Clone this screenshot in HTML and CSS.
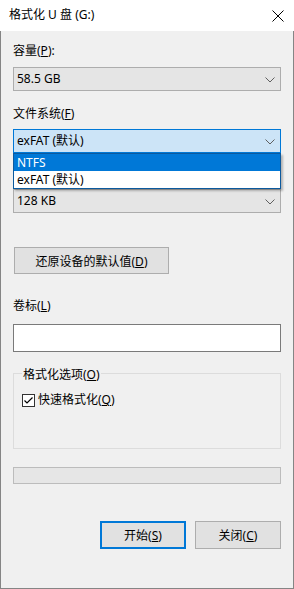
FILE: index.html
```html
<!DOCTYPE html>
<html lang="zh-CN">
<head>
  <meta charset="UTF-8">
  <meta name="viewport" content="width=device-width, initial-scale=1.0">
  <title>格式化 U 盘 (G:)</title>
  <link rel="stylesheet" href="styles.css">
</head>
<body>
  <div class="window">
    <!-- Barra de título -->
    <div class="titlebar">
      <span class="title">格式化 U 盘 (G:)</span>
      <svg class="close" width="12" height="12" viewBox="0 0 12 12">
        <path d="M0.5 0.5 L11.5 11.5 M11.5 0.5 L0.5 11.5" stroke="#000" stroke-width="1" fill="none"/>
      </svg>
    </div>

    <div class="content">
      <div class="label first">容量(<u>P</u>):</div>
      <div class="combo">
        <span>58.5 GB</span>
        <svg class="chev" width="10" height="6" viewBox="0 0 10 6"><path d="M0.5 0.5 L5 5 L9.5 0.5" stroke="#606060" fill="none"/></svg>
      </div>

      <div class="label">文件系统(<u>F</u>)</div>
      <div class="combo-wrap">
        <div class="combo open">
          <span>exFAT (默认)</span>
          <svg class="chev" width="10" height="6" viewBox="0 0 10 6"><path d="M0.5 0.5 L5 5 L9.5 0.5" stroke="#606060" fill="none"/></svg>
        </div>
        <ul class="droplist">
          <li class="selected">NTFS</li>
          <li>exFAT (默认)</li>
        </ul>
      </div>

      <!-- rótulo coberto pela lista aberta -->
      <div class="spacer"></div>
      <div class="combo">
        <span>128 KB</span>
        <svg class="chev" width="10" height="6" viewBox="0 0 10 6"><path d="M0.5 0.5 L5 5 L9.5 0.5" stroke="#606060" fill="none"/></svg>
      </div>

      <button class="btn restore">还原设备的默认值(<u>D</u>)</button>

      <div class="label volume">卷标(<u>L</u>)</div>
      <div class="textbox"></div>

      <!-- Opções -->
      <div class="group">
        <span class="legend">格式化选项(<u>O</u>)</span>
        <div class="check">
          <svg width="13" height="13" viewBox="0 0 13 13">
            <rect x="0.5" y="0.5" width="12" height="12" fill="#fff" stroke="#333"/>
            <path d="M2.5 6.5 L5 9 L10.5 3.5" stroke="#000" stroke-width="1.2" fill="none"/>
          </svg>
          <span>快速格式化(<u>Q</u>)</span>
        </div>
      </div>

      <div class="progress"></div>

      <div class="actions">
        <button class="btn action default">开始(<u>S</u>)</button>
        <button class="btn action">关闭(<u>C</u>)</button>
      </div>
    </div>
  </div>
</body>
</html>
```

FILE: styles.css
```css
/* Base */
body {
  margin: 0;
  font-family: "Noto Sans", "Noto Sans CJK SC", sans-serif;
  font-size: 12px;
  color: #000;
  background: #fff;
}

u {
  text-decoration-thickness: 1px;
  text-underline-offset: 1px;
}

.window {
  width: 294px;
  height: 589px;
  display: flex;
  flex-direction: column;
  box-sizing: border-box;
}

/* Barra de título */
.titlebar {
  height: 31px;
  background: #fff;
  display: flex;
  align-items: center;
  justify-content: space-between;
  padding: 0 10px 0 9px;
  flex-shrink: 0;
}

.title {
  line-height: 16px;
  margin-top: -1px;
}

.close {
  margin-top: 1px;
}

.content {
  flex: 1;
  background: #f0f0f0;
  border: 1px solid #858585;
  border-top: none;
  padding: 0 12px;
  display: flex;
  flex-direction: column;
}

.label {
  line-height: 16px;
  height: 16px;
  margin: 15px 0 7px;
}

.label.first {
  margin-top: 12px;
  margin-bottom: 8px;
}

.label.volume {
  margin: 24px 0 10px;
}

.spacer {
  height: 36px;
}

/* Combos */
.combo {
  height: 24px;
  box-sizing: border-box;
  border: 1px solid #adadad;
  background: #e5e5e5;
  display: flex;
  align-items: center;
  justify-content: space-between;
  padding: 0 5px 0 3px;
}

.combo span {
  line-height: 16px;
}

.combo.open {
  background: #cce4f7;
  border-color: #0078d7;
}

.chev {
  margin-top: 1px;
}

.combo-wrap {
  position: relative;
}

.droplist {
  position: absolute;
  left: 0;
  right: 0;
  top: 24px;
  margin: 0;
  padding: 0;
  list-style: none;
  background: #fff;
  border: 1px solid #0c5a9e;
  box-shadow: 2px 2px 2px rgba(0, 0, 0, 0.25);
  z-index: 5;
}

.droplist li {
  height: 17px;
  line-height: 17px;
  padding: 0 3px;
}

.droplist li.selected {
  background: #0078d7;
  color: #fff;
}

/* Botões */
.btn {
  font-family: inherit;
  font-size: 12px;
  color: #000;
  background: #e1e1e1;
  border: 1px solid #adadad;
  padding: 0;
  box-sizing: border-box;
}

.restore {
  margin: 34px 0 0 1px;
  width: 155px;
  height: 27px;
}

.textbox {
  height: 28px;
  box-sizing: border-box;
  background: #fff;
  border: 1px solid #7a7a7a;
}

/* Grupo */
.group {
  margin-top: 21px;
  height: 76px;
  box-sizing: border-box;
  border: 1px solid #dcdcdc;
  padding: 0 8px;
}

.legend {
  display: block;
  width: fit-content;
  margin-top: -7px;
  padding: 0 1px;
  background: #f0f0f0;
  line-height: 16px;
}

.check {
  display: flex;
  align-items: center;
  gap: 3px;
  margin-top: 9px;
  line-height: 16px;
}

.progress {
  margin-top: 18px;
  height: 17px;
  box-sizing: border-box;
  background: #e6e6e6;
  border: 1px solid #bcbcbc;
}

.actions {
  display: flex;
  justify-content: flex-end;
  gap: 9px;
  margin-top: 37px;
}

.action {
  width: 86px;
  height: 28px;
}

.action.default {
  border: 2px solid #0078d7;
}
```
